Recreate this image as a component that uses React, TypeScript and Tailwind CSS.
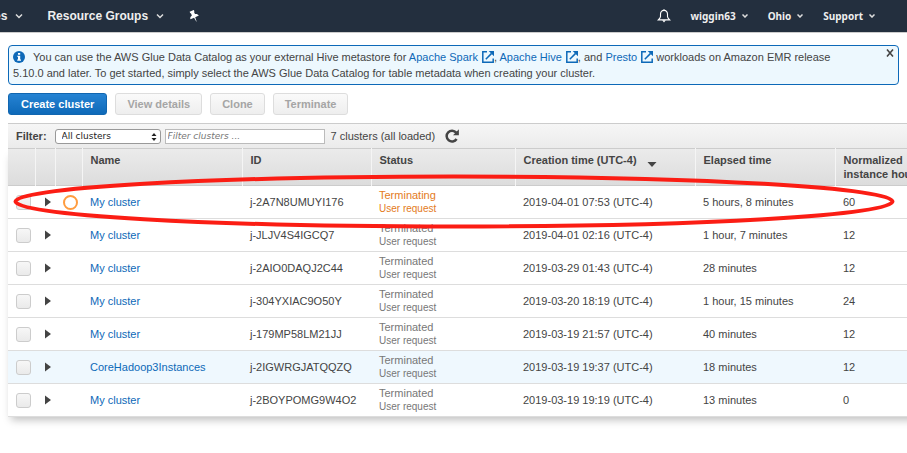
import { Fragment, type ReactNode } from "react";

type Cluster = {
  name: string;
  id: string;
  status: string;
  created: string;
  elapsed: string;
  hours: number;
  active?: boolean;
  highlighted?: boolean;
};

const clusters: Cluster[] = [
  { name: "My cluster", id: "j-2A7N8UMUYI176", status: "Terminating", created: "2019-04-01 07:53 (UTC-4)", elapsed: "5 hours, 8 minutes", hours: 60, active: true },
  { name: "My cluster", id: "j-JLJV4S4IGCQ7", status: "Terminated", created: "2019-04-01 02:16 (UTC-4)", elapsed: "1 hour, 7 minutes", hours: 12 },
  { name: "My cluster", id: "j-2AIO0DAQJ2C44", status: "Terminated", created: "2019-03-29 01:43 (UTC-4)", elapsed: "28 minutes", hours: 12 },
  { name: "My cluster", id: "j-304YXIAC9O50Y", status: "Terminated", created: "2019-03-20 18:19 (UTC-4)", elapsed: "1 hour, 15 minutes", hours: 24 },
  { name: "My cluster", id: "j-179MP58LM21JJ", status: "Terminated", created: "2019-03-19 21:57 (UTC-4)", elapsed: "40 minutes", hours: 12 },
  { name: "CoreHadoop3Instances", id: "j-2IGWRGJATQQZQ", status: "Terminated", created: "2019-03-19 19:37 (UTC-4)", elapsed: "18 minutes", hours: 12, highlighted: true },
  { name: "My cluster", id: "j-2BOYPOMG9W4O2", status: "Terminated", created: "2019-03-19 19:19 (UTC-4)", elapsed: "13 minutes", hours: 0 },
];

function Chevron({ small = false }: { small?: boolean }) {
  return (
    <svg className={small ? "h-1 w-1.5" : "h-2 w-2"} viewBox={small ? "0 0 6 4" : "0 0 8 8"} fill="none" stroke="#ddd" strokeWidth="1.5" aria-hidden="true">
      <path d={small ? "M0.5 0.5 3 3 5.5 0.5" : "M1 2.5 4 5.5 7 2.5"} />
    </svg>
  );
}

function PinIcon() {
  return (
    <svg className="h-3 w-3" viewBox="0 0 12 12" fill="#fff" aria-hidden="true">
      <path transform="rotate(-24 6 6)" d="M3.7 0.4H8.3V1.9L7.7 2.3V4.6C9.4 5.1 10.5 6 10.6 7.6H6.6L6.2 12H5.8L5.4 7.6H1.4C1.5 6 2.6 5.1 4.3 4.6V2.3L3.7 1.9Z" />
    </svg>
  );
}

function BellIcon() {
  return (
    <svg className="h-3.5 w-3.5" viewBox="0 0 14 14" fill="none" stroke="#fff" strokeWidth="1.1" aria-hidden="true">
      <path d="M7 1.4C4.5 1.4 3.5 3.2 3.5 5.3V7.4C3.5 8.7 2.6 9.6 1.3 10.9H12.7C11.4 9.6 10.5 8.7 10.5 7.4V5.3C10.5 3.2 9.5 1.4 7 1.4Z" />
      <path d="M7 0.2V1.6" />
      <path d="M5.2 11.2H8.8L7 13.4Z" fill="#fff" stroke="none" />
    </svg>
  );
}

function InfoIcon() {
  return (
    <svg className="mr-2 inline h-3 w-3 align-[-2px]" viewBox="0 0 12 12" aria-hidden="true">
      <circle cx="6" cy="6" r="6" fill="#0d69b8" />
      <path d="M5 2H7.2V3.7H5ZM4.2 4.7H7.2V8.5H8V9.7H4.2V8.5H5V5.8H4.2Z" fill="#fff" />
    </svg>
  );
}

function ExternalLink({ children }: { children: ReactNode }) {
  return (
    <a href="#docs" className="text-[#0d69b8]">
      {children}
      <svg className="ml-1 inline h-3 w-3 align-[-2px]" viewBox="0 0 12 12" fill="none" stroke="#0d69b8" strokeWidth="1.5" aria-hidden="true">
        <path d="M5 0.8H0.8V11.2H11.2V7.5" />
        <path d="M3.8 8.2 9.6 2.4" />
        <path d="M6.7 0H12V5.3L10.2 3.5 8.5 1.8Z" fill="#0d69b8" stroke="none" />
      </svg>
    </a>
  );
}

function RefreshIcon() {
  return (
    <svg className="h-3.5 w-3.5" viewBox="0 0 14 14" fill="none" stroke="#444" strokeWidth="2.5" aria-hidden="true">
      <path d="M11.2 3.6A5.4 5.4 0 1 0 11.6 10" />
      <path d="M13.9 0.3V6.3H8Z" fill="#444" stroke="none" />
    </svg>
  );
}

function TopBar() {
  return (
    <header className="flex h-8 items-center justify-between bg-[#232f3e] text-[#eee]">
      <nav className="-ml-[42px] flex items-center gap-6 text-xs font-bold">
        <button className="flex items-center gap-2">
          Services <Chevron />
        </button>
        <button className="flex items-center gap-2">
          Resource Groups <Chevron />
        </button>
        <button aria-label="Pin shortcuts">
          <PinIcon />
        </button>
      </nav>
      <div className="mr-8 flex items-center gap-5 font-['Noto_Sans',sans-serif] text-[10px] font-bold">
        <button aria-label="Notifications">
          <BellIcon />
        </button>
        {["wiggin63", "Ohio", "Support"].map((label) => (
          <button key={label} className="flex items-center gap-1.5">
            {label} <Chevron small />
          </button>
        ))}
      </div>
    </header>
  );
}

function Notice() {
  return (
    <div className="mx-2 mt-3 flex items-start justify-between rounded border border-[#0d69b8] bg-[#edf8fe] py-[3px] px-1">
      <p className="max-w-[848px] leading-4">
        <InfoIcon />
        You can use the AWS Glue Data Catalog as your external Hive metastore for <ExternalLink>Apache Spark</ExternalLink>,{" "}
        <ExternalLink>Apache Hive</ExternalLink>, and <ExternalLink>Presto</ExternalLink> workloads on Amazon EMR release <br />
        5.10.0 and later. To get started, simply select the AWS Glue Data Catalog for table metadata when creating your cluster.
      </p>
      <button aria-label="Dismiss">
        <svg className="h-2 w-2" viewBox="0 0 8 8" stroke="#444" strokeWidth="1.6" aria-hidden="true">
          <path d="M1 0.5 7 7.5M7 0.5 1 7.5" />
        </svg>
      </button>
    </div>
  );
}

function Actions() {
  return (
    <div className="mx-2 mt-2 flex gap-2 font-bold">
      <button className="h-[22px] rounded-[3px] border border-[#1166b0] bg-linear-to-b from-[#2583d3] to-[#0d69b8] px-3 text-white">
        Create cluster
      </button>
      {["View details", "Clone", "Terminate"].map((label) => (
        <button key={label} disabled className="h-[22px] rounded-[3px] border border-[#ddd] bg-linear-to-b from-[#fafafa] to-[#eee] px-[11px] text-[#a5a5a5]">
          {label}
        </button>
      ))}
    </div>
  );
}

function FilterBar() {
  return (
    <div className="flex h-[25px] items-center border-t border-[#ccc] bg-linear-to-b from-[#f6f6f6] to-[#ebebeb] pl-2">
      <label htmlFor="state" className="mr-2 font-bold">
        Filter:
      </label>
      <div className="relative mr-1">
        <select id="state" className="block h-[15px] w-[106px] appearance-none rounded-[3px] border border-[#999] bg-white pl-1.5 font-['DejaVu_Sans',sans-serif] text-[9px] text-[#222]">
          <option>All clusters</option>
        </select>
        <svg className="pointer-events-none absolute top-1 right-1 h-2 w-1.5" viewBox="0 0 6 8" fill="#222" aria-hidden="true">
          <path d="M3 0 5.5 3H0.5ZM3 8 0.5 5H5.5Z" />
        </svg>
      </div>
      <input
        aria-label="Filter clusters"
        placeholder="Filter clusters ..."
        className="mr-1.5 h-[15px] w-40 border border-[#bbb] bg-white px-0.5 font-['DejaVu_Sans',sans-serif] text-[9px] placeholder:text-[#777] placeholder:italic"
      />
      <span className="mr-2.5">7 clusters (all loaded)</span>
      <button aria-label="Refresh">
        <RefreshIcon />
      </button>
    </div>
  );
}

const headers: ReactNode[] = [
  "",
  "",
  "",
  "Name",
  "ID",
  "Status",
  <Fragment key="created">
    Creation time (UTC-4)
    <svg className="ml-2.5 inline h-[5px] w-2.5 align-[-3px]" viewBox="0 0 10 5" fill="#444" aria-hidden="true">
      <path d="M0.5 0H9.5L5 5Z" />
    </svg>
  </Fragment>,
  "Elapsed time",
  <Fragment key="hours">
    Normalized
    <br />
    instance hours
  </Fragment>,
];

function ClusterTable() {
  return (
    <table className="w-full min-w-[927px] table-fixed border-collapse text-left whitespace-nowrap shadow-[0_6px_8px_-3px_rgba(0,0,0,0.25)]">
      <colgroup>
        <col className="w-[27px]" />
        <col className="w-5" />
        <col className="w-[27px]" />
        <col className="w-40" />
        <col className="w-[129px]" />
        <col className="w-36" />
        <col className="w-[180px]" />
        <col className="w-[140px]" />
        <col />
      </colgroup>
      <thead className="bg-linear-to-b from-[#ebebeb] to-[#dcdcdc]">
        <tr className="h-[37px] border-y border-[#ccc]">
          {headers.map((header, i) => (
            <th key={i} scope="col" className="border-r border-[#f5f5f5] pt-1 pl-2 align-top leading-3.5 font-bold">
              {header}
            </th>
          ))}
        </tr>
      </thead>
      <tbody>
        {clusters.map((c) => (
          <tr key={c.id} className={`h-[33px] border-b border-[#ddd] ${c.highlighted ? "bg-[#eff8fe]" : "bg-white"}`}>
            <td className="pl-2">
              <input
                type="checkbox"
                aria-label={`Select ${c.id}`}
                className="block h-[15px] w-[15px] appearance-none rounded-[3px] border border-[#ccc] bg-linear-to-b from-[#f7f7f7] to-[#eaeaea]"
              />
            </td>
            <td className="pl-2.5">
              <button aria-label={`Expand ${c.id}`} className="block">
                <svg className="h-2.5 w-1.5" viewBox="0 0 6 10" fill="#444" aria-hidden="true">
                  <path d="M0 0.5 6 5 0 9.5Z" />
                </svg>
              </button>
            </td>
            <td className="pl-2">{c.active && <span className="block h-[15px] w-[15px] rounded-full border-2 border-[#ff9c3f]" />}</td>
            <td className="pl-2">
              <a href="#cluster" className="text-[#0d69b8]">
                {c.name}
              </a>
            </td>
            <td className="pl-2">{c.id}</td>
            <td className={`pl-2 leading-[13px] ${c.active ? "text-[#e47b22]" : "text-[#777]"}`}>
              {c.status}
              <div className="text-[10px]">User request</div>
            </td>
            <td className="pl-2">{c.created}</td>
            <td className="pl-2">{c.elapsed}</td>
            <td className="pl-2">{c.hours}</td>
          </tr>
        ))}
      </tbody>
    </table>
  );
}

export default function App() {
  return (
    <div className="min-h-screen overflow-hidden bg-white font-['Liberation_Sans',Arial,sans-serif] text-[11px] text-[#444]">
      <TopBar />
      <div className="border-t border-[#ccc]" />
      <Notice />
      <Actions />
      <main className="relative mt-2 ml-2">
        <FilterBar />
        <ClusterTable />
        <svg className="pointer-events-none absolute top-[50px] left-1 h-14 w-[888px]" viewBox="0 0 888 56" fill="none" stroke="#fb1d14" strokeWidth="4" aria-hidden="true">
          <ellipse cx="442" cy="28.5" rx="438.5" ry="25" />
        </svg>
      </main>
    </div>
  );
}
